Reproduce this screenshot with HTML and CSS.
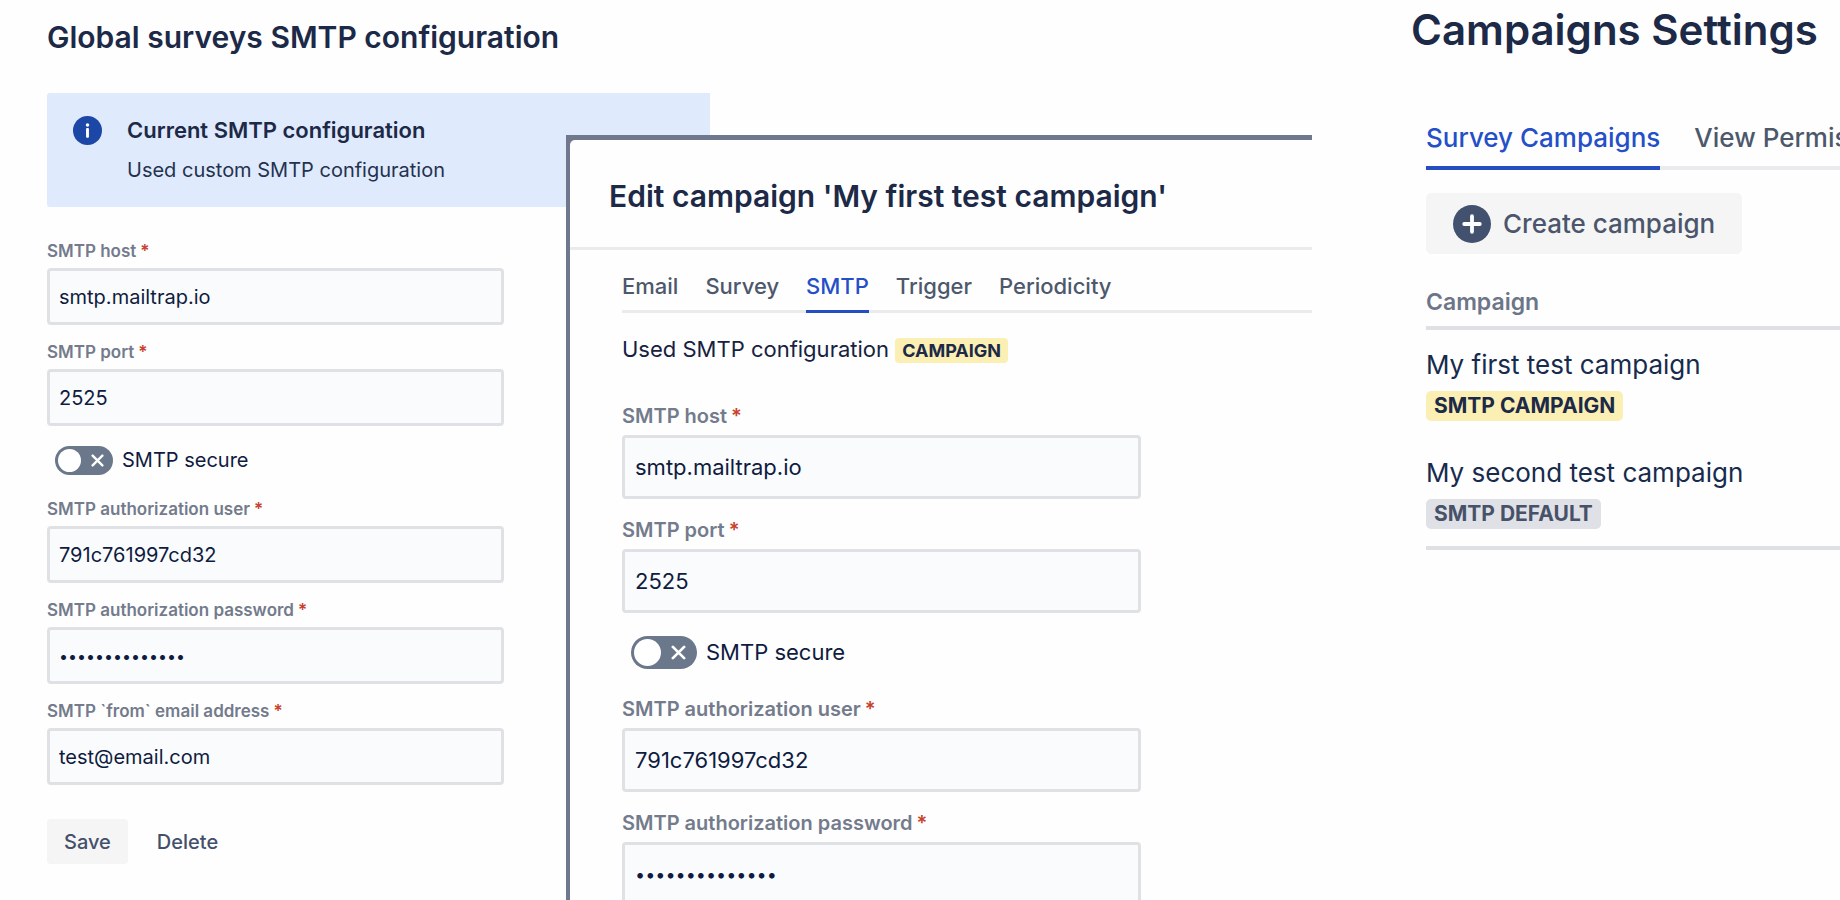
FILE: index.html
```html
<!DOCTYPE html>
<html lang="en">
<head>
<meta charset="utf-8">
<title>SMTP configuration</title>
<link rel="stylesheet" href="styles.css">
</head>
<body>
<main class="board">
  <section class="global">
    <h1 class="global-title">Global surveys SMTP configuration</h1>
    <div class="notice">
      <svg class="notice-icon" viewBox="0 0 28 28" aria-hidden="true"><circle cx="14" cy="14" r="14" fill="#1c47a6"/><circle cx="14" cy="8.6" r="1.7" fill="#fff"/><rect x="12.6" y="11.6" width="2.8" height="9.4" rx="1" fill="#fff"/></svg>
      <div class="notice-body">
        <h2 class="notice-title">Current SMTP configuration</h2>
        <p class="notice-text">Used custom SMTP configuration</p>
      </div>
    </div>
    <form class="form">
      <div class="field"><label class="label" for="g-host">SMTP host<span class="req">*</span></label><input class="input" id="g-host" type="text" value="smtp.mailtrap.io"></div>
      <div class="field"><label class="label" for="g-port">SMTP port<span class="req">*</span></label><input class="input" id="g-port" type="text" value="2525"></div>
      <label class="toggle"><span class="switch"><input class="switch-input" type="checkbox"><svg class="switch-x" viewBox="0 0 12 12" aria-hidden="true"><path d="M1.5 1.5l9 9M10.5 1.5l-9 9" stroke="#fff" stroke-width="2.2" stroke-linecap="round"/></svg></span>SMTP secure</label>
      <div class="field"><label class="label" for="g-user">SMTP authorization user<span class="req">*</span></label><input class="input" id="g-user" type="text" value="791c761997cd32"></div>
      <div class="field"><label class="label" for="g-pass">SMTP authorization password<span class="req">*</span></label><input class="input input-secret" id="g-pass" type="password" value="abcdefghijklmn"></div>
      <div class="field"><label class="label" for="g-from">SMTP `from` email address<span class="req">*</span></label><input class="input" id="g-from" type="email" value="test@email.com"></div>
      <div class="actions"><button class="btn btn-filled" type="button">Save</button><button class="btn" type="button">Delete</button></div>
    </form>
  </section>

  <section class="modal">
    <header class="modal-head"><h2 class="modal-title">Edit campaign 'My first test campaign'</h2></header>
    <div class="modal-body">
      <nav class="tabs">
        <button class="tab" type="button">Email</button>
        <button class="tab" type="button">Survey</button>
        <button class="tab tab-on" type="button">SMTP</button>
        <button class="tab" type="button">Trigger</button>
        <button class="tab" type="button">Periodicity</button>
      </nav>
      <p class="used">Used SMTP configuration <span class="badge badge-yellow">CAMPAIGN</span></p>
      <form class="form form-large">
        <div class="field"><label class="label" for="c-host">SMTP host<span class="req">*</span></label><input class="input" id="c-host" type="text" value="smtp.mailtrap.io"></div>
        <div class="field"><label class="label" for="c-port">SMTP port<span class="req">*</span></label><input class="input" id="c-port" type="text" value="2525"></div>
        <label class="toggle"><span class="switch"><input class="switch-input" type="checkbox"><svg class="switch-x" viewBox="0 0 12 12" aria-hidden="true"><path d="M1.5 1.5l9 9M10.5 1.5l-9 9" stroke="#fff" stroke-width="2.2" stroke-linecap="round"/></svg></span>SMTP secure</label>
        <div class="field"><label class="label" for="c-user">SMTP authorization user<span class="req">*</span></label><input class="input" id="c-user" type="text" value="791c761997cd32"></div>
        <div class="field"><label class="label" for="c-pass">SMTP authorization password<span class="req">*</span></label><input class="input input-secret" id="c-pass" type="password" value="abcdefghijklmn"></div>
      </form>
    </div>
  </section>

  <section class="campaigns">
    <h1 class="campaigns-title">Campaigns Settings</h1>
    <div class="campaigns-body">
      <nav class="tabs tabs-large">
        <button class="tab tab-on" type="button">Survey Campaigns</button>
        <button class="tab" type="button">View Permissions</button>
      </nav>
      <button class="create" type="button"><svg class="create-icon" viewBox="0 0 38 38" aria-hidden="true"><circle cx="19" cy="19" r="19" fill="#42526e"/><path d="M19 11.2v15.6M11.2 19h15.6" stroke="#fff" stroke-width="3.8" stroke-linecap="round"/></svg>Create campaign</button>
      <table class="table">
        <thead><tr><th class="th">Campaign</th></tr></thead>
        <tbody>
          <tr><td class="td"><div class="name">My first test campaign</div><div class="badge badge-large badge-yellow">SMTP CAMPAIGN</div></td></tr>
          <tr><td class="td"><div class="name">My second test campaign</div><div class="badge badge-large badge-grey">SMTP DEFAULT</div></td></tr>
        </tbody>
      </table>
    </div>
  </section>
</main>
</body>
</html>
```
FILE: styles.css
```css
* { box-sizing: border-box; }

body {
  margin: 0;
  background: #fefefe;
  color: #172b4d;
  font-family: Inter, "Liberation Sans", sans-serif;
}

h1, h2, p { margin: 0; }

h1, h2 { font-weight: 600; color: #1c2947; white-space: nowrap; }

button, input { font-family: inherit; }

/* The modal shares its first column with the end of the global panel. */
.board {
  display: grid;
  grid-template-columns: 566fr 144fr 602fr 99fr 429fr;
  height: 100vh;
  overflow: hidden;
}

.global {
  grid-column: 1 / 3;
  grid-row: 1;
  padding: 17px 0 0 47px;
}

.global-title { font-size: 30px; line-height: 40px; }

.notice {
  display: flex;
  gap: 25px;
  margin-top: 36px;
  padding: 23px 26px;
  height: 114px;
  background: #dfeafd;
  border-radius: 3px 0 0 3px;
}

.notice-icon { flex: none; width: 29px; height: 29px; }

.notice-title { font-size: 22px; line-height: 28px; }

.notice-text { margin-top: 12px; font-size: 20px; line-height: 28px; color: #24324f; }

.form { width: 457px; margin-top: 34px; }

.field { margin-bottom: 17px; }

.label {
  display: block;
  margin-bottom: 7px;
  font-size: 17px;
  line-height: 20px;
  font-weight: 600;
  color: #737b8c;
}

.req { margin-left: 4px; color: #c9412b; }

.input {
  display: block;
  width: 100%;
  height: 57px;
  padding: 0 9px;
  border: 3px solid #dfe1e5;
  border-radius: 4px;
  background: #fafbfd;
  color: #0f1b40;
  font-size: 20px;
}

.input-secret { font-size: 16px; }

.toggle {
  display: flex;
  align-items: center;
  gap: 9px;
  margin: 20px 0 24px 8px;
  font-size: 20px;
  line-height: 29px;
  color: #0f1b40;
}

.switch { position: relative; display: block; width: 58px; height: 29px; }

.switch-input {
  appearance: none;
  display: block;
  width: 100%;
  height: 100%;
  margin: 0;
  padding: 3px;
  border-radius: 17px;
  background: #6b778a;
}

.switch-input::before {
  content: "";
  display: block;
  height: 100%;
  aspect-ratio: 1;
  border-radius: 50%;
  background: #fff;
}

.switch-x { position: absolute; top: 8px; right: 9px; width: 13px; height: 13px; }

.actions { display: flex; gap: 12px; margin-top: 34px; }

.btn {
  height: 45px;
  padding: 0 17px;
  border: 0;
  border-radius: 4px;
  background: none;
  color: #44506a;
  font-size: 20px;
  font-weight: 500;
}

.btn-filled { background: #f5f5f5; }

.modal {
  grid-column: 2 / 4;
  grid-row: 1;
  margin-top: 135px;
  border: solid #6f788d;
  border-width: 5px 0 0 4px;
  background: #6f788d;
  overflow: hidden;
}

.modal-head {
  padding: 38px 0 33px 39px;
  border-bottom: 3px solid #eaebed;
  border-radius: 5px 0 0 0;
  background: #fefefe;
}

.modal-title { font-size: 30px; line-height: 36px; }

.modal-body { height: 100%; padding: 23px 0 0 52px; background: #fefefe; }

.tabs {
  display: flex;
  gap: 27px;
  box-shadow: inset 0 -3px #eaebed;
}

.tab {
  flex: none;
  padding: 0 0 10px;
  border: 0;
  border-bottom: 3px solid transparent;
  background: none;
  color: #4d586c;
  font-size: 22px;
  line-height: 27px;
  font-weight: 500;
}

.tab-on { border-color: #254fc0; color: #254fc8; }

.used { margin-top: 21px; font-size: 22px; line-height: 30px; color: #172140; }

.badge {
  display: inline-block;
  padding: 0 7px;
  border-radius: 4px;
  font-size: 18px;
  line-height: 25px;
  font-weight: 700;
}

.badge-yellow { background: #fbefb3; color: #1c2947; }

.badge-grey { background: #dfe1e6; color: #475269; }

.form-large { width: 519px; margin-top: 40px; }

.form-large .field { margin-bottom: 18px; }

.form-large .label { margin-bottom: 7px; font-size: 20px; line-height: 24px; }

.form-large .field + .field .label { padding-top: 1px; }

.form-large .input { height: 64px; padding: 0 10px; font-size: 22px; }

.form-large .input-secret { font-size: 18px; }

.form-large .toggle { margin: 23px 0 28px 9px; font-size: 22px; line-height: 33px; }

.form-large .switch { width: 66px; height: 33px; }

.form-large .switch-x { top: 9px; right: 11px; width: 15px; height: 15px; }

.campaigns {
  grid-column: 5;
  grid-row: 1;
  overflow: hidden;
}

.campaigns-title { font-size: 42px; line-height: 60px; }

.campaigns-body { padding-left: 15px; }

.tabs-large { gap: 34px; margin-top: 61px; box-shadow: inset 0 -4px #eaebed; }

.tabs-large .tab { padding-bottom: 12px; border-bottom-width: 4px; font-size: 26px; line-height: 33px; }

.create {
  display: flex;
  align-items: center;
  gap: 12px;
  height: 61px;
  margin-top: 23px;
  padding: 0 27px;
  border: 0;
  border-radius: 5px;
  background: #f5f5f5;
  color: #4b566c;
  font-size: 26px;
  font-weight: 500;
}

.create-icon { width: 38px; height: 38px; }

.table {
  width: 100%;
  margin-top: 32px;
  border-collapse: collapse;
  text-align: left;
}

.th {
  padding: 0 0 8px;
  border-bottom: 4px solid #dfe0e6;
  font-size: 23px;
  line-height: 32px;
  font-weight: 600;
  color: #6d7588;
}

.td { padding: 18px 0 17px; font-size: 26px; line-height: 34px; }

.table tbody { border-bottom: 4px solid #dfe0e6; }

.name { margin-bottom: 9px; white-space: nowrap; }

.badge-large { display: block; width: max-content; padding: 0 8px; border-radius: 5px; font-size: 21px; line-height: 30px; }
```
